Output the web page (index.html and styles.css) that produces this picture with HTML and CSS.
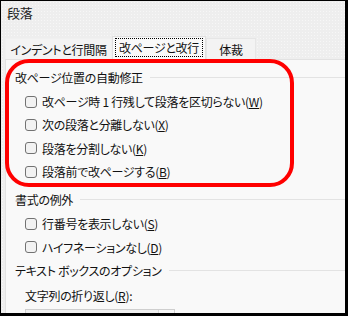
FILE: index.html
```html
<!DOCTYPE html>
<html lang="ja">
<head>
    <meta charset="UTF-8" />
    <meta name="viewport" content="width=device-width, initial-scale=1.0" />
    <title>段落</title>
    <link rel="stylesheet" href="styles.css">
</head>
<body>

<div class="dialog">
    <div class="titlebar">段落</div>

    <div class="tabs">
        <div class="tab tab-first">インデントと行間隔</div>
        <div class="tab active"><span class="focus">改ページと改行</span></div>
        <div class="tab tab-last">体裁</div>
    </div>

    <div class="panel">
        <div class="group">
            <div class="group-title">改ページ位置の自動修正</div>
            <label class="row"><span class="check"></span><span>改ページ時 1 行残して段落を区切らない(<u>W</u>)</span></label>
            <label class="row"><span class="check"></span><span>次の段落と分離しない(<u>X</u>)</span></label>
            <label class="row"><span class="check"></span><span>段落を分割しない(<u>K</u>)</span></label>
            <label class="row"><span class="check"></span><span>段落前で改ページする(<u>B</u>)</span></label>
        </div>

        <div class="group">
            <div class="group-title">書式の例外</div>
            <label class="row"><span class="check"></span><span>行番号を表示しない(<u>S</u>)</span></label>
            <label class="row"><span class="check"></span><span>ハイフネーションなし(<u>D</u>)</span></label>
        </div>

        <div class="group group-last">
            <div class="group-title">テキスト ボックスのオプション</div>
            <div class="row label"><span>文字列の折り返し(<u>R</u>):</span></div>
            <div class="select"><span class="select-btn"></span></div>
        </div>
    </div>

    <!-- red annotation frame -->
    <div class="highlight"></div>
</div>

</body>
</html>
```

FILE: styles.css
```css
body {
    margin: 0;
    font-family: "Noto Sans CJK JP", sans-serif;
    font-feature-settings: "palt";
    font-size: 12px;
    letter-spacing: -0.3px;
    color: #111;
}

.dialog {
    position: relative;
    width: 348px;
    height: 316px;
    box-sizing: border-box;
    border: 1px solid #000;
    border-right-width: 3px;
    border-bottom-width: 3px;
    background-color: #eeeeee;
    background-image: radial-gradient(circle, #f7f7f7 0.6px, transparent 0.8px);
    background-size: 3px 3px;
    display: flex;
    flex-direction: column;
    overflow: hidden;
}

.titlebar {
    height: 24px;
    line-height: 24px;
    padding-left: 6px;
    font-size: 13px;
    color: #222;
}

.tabs {
    height: 34px;
    margin-left: 4px;
    border-bottom: 1px solid #e2e2e2;
    display: flex;
    align-items: flex-end;
}

.tab {
    height: 21px;
    line-height: 21px;
    padding: 0;
    text-align: center;
    white-space: nowrap;
    border: 1px solid #e6e6e6;
    border-bottom: none;
    background-color: #f3f3f3;
    box-sizing: border-box;
}

.tab-first {
    width: 107px;
    border-color: #f0f0f0;
}

.tab.active {
    width: 94px;
    height: 24px;
    line-height: 22px;
    margin-bottom: -1px;
    background-color: #f9f9f9;
    border-color: #e0e0e0;
}

.tab-last {
    width: 50px;
}

.focus {
    display: inline-block;
    line-height: 17px;
    padding: 0 3px;
    border: 1px dotted #000;
}

.panel {
    flex: 1;
    margin-left: 4px;
    padding: 6px 0 0 9px;
    background-color: #f9f9f9;
    border-left: 1px solid #e2e2e2;
    overflow: hidden;
}

.group + .group {
    margin-top: 5px;
}

.group.group-last {
    margin-top: 1px;
}

.group-title {
    height: 22px;
    margin-bottom: 2px;
    display: flex;
    align-items: center;
    gap: 7px;
    white-space: nowrap;
}

.group-title::after {
    content: "";
    flex: 1;
    height: 1px;
    background-color: #e3e3e3;
}

.row {
    height: 23.3px;
    padding-left: 10px;
    display: flex;
    align-items: center;
    gap: 5px;
    white-space: nowrap;
}

.check {
    width: 12px;
    height: 12px;
    box-sizing: border-box;
    border: 1px solid #727272;
    border-radius: 3px;
    background-color: #f2f2f2;
}

.label {
    margin-top: 2px;
}

.select {
    width: 150px;
    height: 20px;
    margin-left: 10px;
    margin-top: 2px;
    box-sizing: border-box;
    border: 1px solid #cfcfcf;
    background-color: #efefef;
    display: flex;
    justify-content: flex-end;
}

.select-btn {
    width: 15px;
    border-left: 1px solid #d8d8d8;
    background-color: #f6f6f6;
}

.highlight {
    position: absolute;
    left: 4px;
    top: 58px;
    width: 289px;
    height: 128px;
    box-sizing: border-box;
    border: 4px solid #ff0000;
    border-radius: 24px;
}
```
